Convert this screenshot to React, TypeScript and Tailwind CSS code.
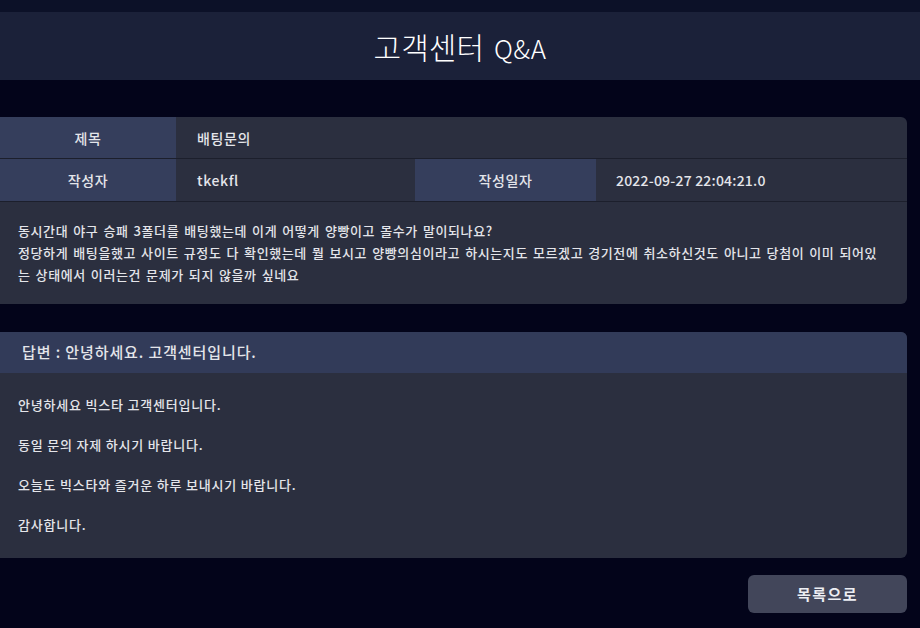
export default function App() {
  const font = { fontFamily: '"Noto Sans CJK KR", "Noto Sans", sans-serif' };

  return (
    <div className="min-h-[628px] w-full bg-[#03041a] text-[#e4e5ea]" style={font}>
      <div className="h-3 bg-[#0c1128]" />
      <header className="flex h-[68px] items-center justify-center bg-[#1b2139]">
        <h1 className="flex items-baseline gap-[10px] font-light text-white">
          <span className="text-[30px]">고객센터</span>
          <span className="text-[26px] tracking-[0.5px]">Q&amp;A</span>
        </h1>
      </header>

      <main className="mr-[13px] pt-[37px]">
        <section className="overflow-hidden rounded-r-md bg-[#2b2f3f]">
          <div className="flex h-[42px] border-b border-[#1c1f2c] text-sm font-medium tracking-[0.6px]">
            <div className="flex w-[176px] items-center justify-center bg-[#353e5c]">제목</div>
            <div className="flex flex-1 items-center px-[21px]">배팅문의</div>
          </div>
          <div className="flex h-[43px] border-b border-[#1c1f2c] text-sm font-medium tracking-[0.6px]">
            <div className="flex w-[176px] items-center justify-center bg-[#353e5c]">작성자</div>
            <div className="flex w-[239px] items-center px-[21px]">tkekfl</div>
            <div className="flex w-[181px] items-center justify-center bg-[#353e5c]">작성일자</div>
            <div className="flex flex-1 items-center px-[20px] tracking-[0.2px]">2022-09-27 22:04:21.0</div>
          </div>
          <div className="px-[18px] py-[18px] text-[13px] font-medium leading-[22px] tracking-[0.6px] [word-spacing:1.5px]">
            동시간대 야구 승패 3폴더를 배팅했는데 이게 어떻게 양빵이고 몰수가 말이되나요?
            <br />
            정당하게 배팅을했고 사이트 규정도 다 확인했는데 뭘 보시고 양빵의심이라고 하시는지도 모르겠고 경기전에 취소하신것도 아니고 당첨이 이미 되어있
            <br />
            는 상태에서 이러는건 문제가 되지 않을까 싶네요
          </div>
        </section>

        <section className="mt-[28px] overflow-hidden rounded-r-md bg-[#2b2f3f]">
          <div className="flex h-[41px] items-center bg-[#323b59] px-[22px] text-[15px] font-medium tracking-[0.9px]">
            답변 : 안녕하세요. 고객센터입니다.
          </div>
          <div className="px-[18px] pb-[23px] pt-[22px] text-[13px] font-medium leading-[20px] tracking-[0.8px]">
            <p>안녕하세요 빅스타 고객센터입니다.</p>
            <p>&nbsp;</p>
            <p>동일 문의 자제 하시기 바랍니다.</p>
            <p>&nbsp;</p>
            <p>오늘도 빅스타와 즐거운 하루 보내시기 바랍니다.</p>
            <p>&nbsp;</p>
            <p>감사합니다.</p>
          </div>
        </section>

        <div className="flex justify-end pt-[17px]">
          <button className="h-[38px] w-[159px] rounded-md bg-[#42465a] text-[15px] font-semibold tracking-[1.5px] text-[#eceef3]">
            목록으로
          </button>
        </div>
      </main>
    </div>
  );
}
